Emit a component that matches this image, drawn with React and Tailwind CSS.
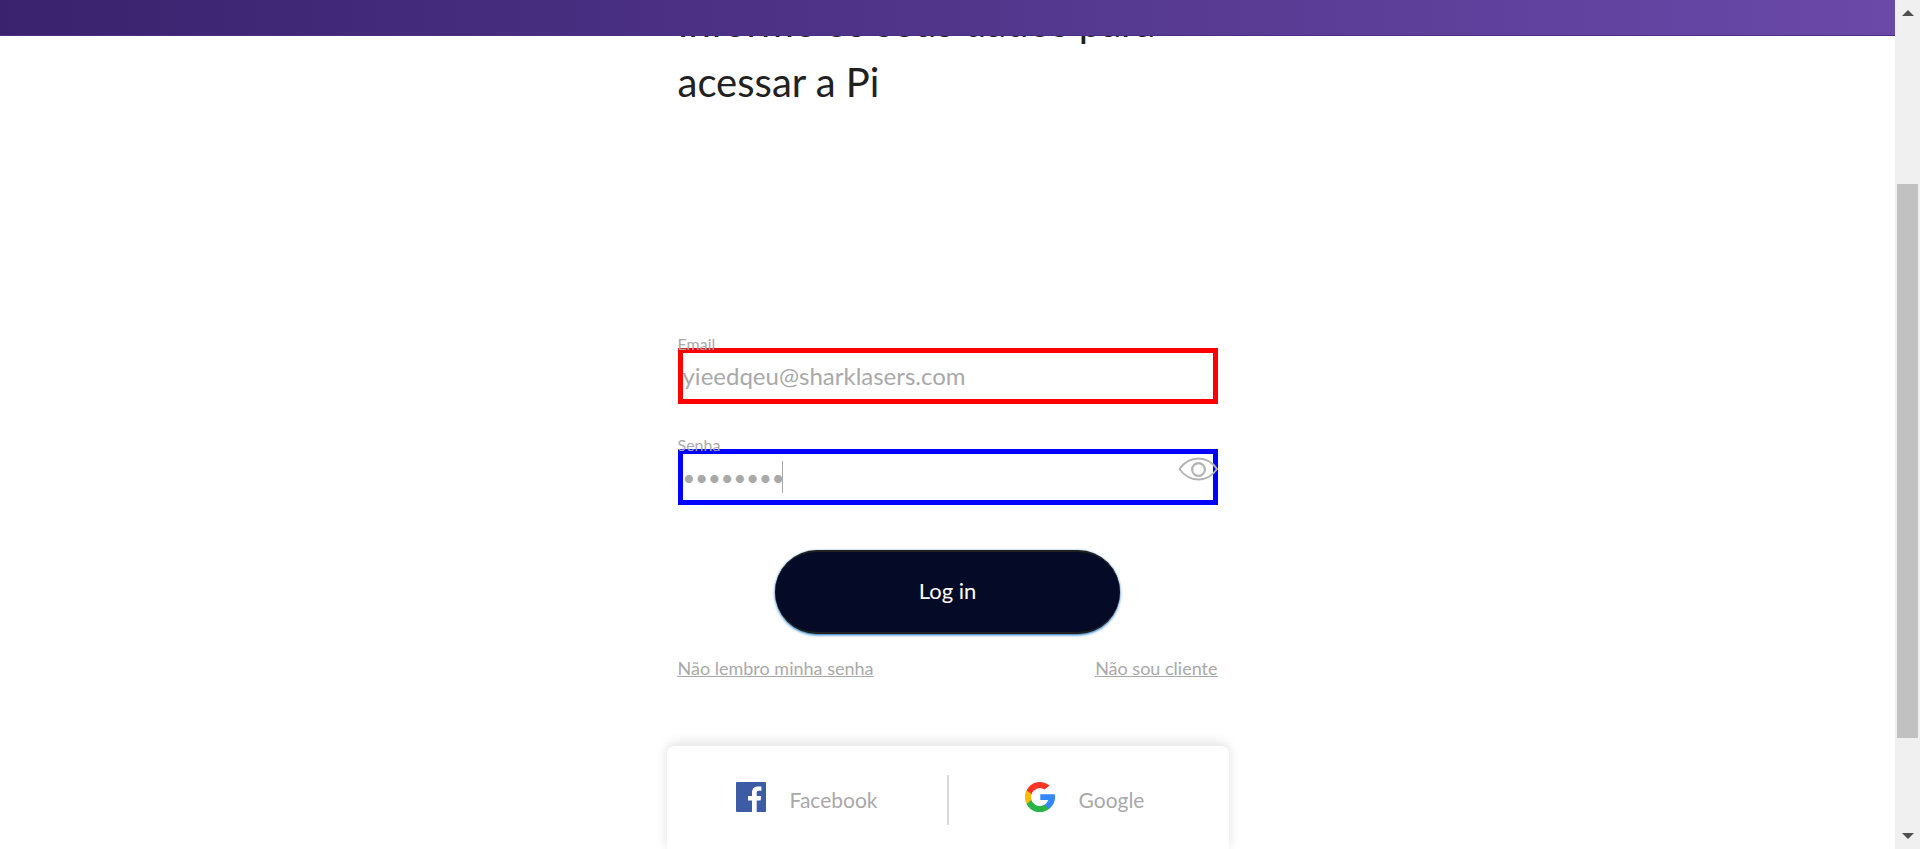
import React from "react";

function FacebookIcon() {
  return (
    <svg className="size-[30px] shrink-0" viewBox="0 0 30 30" aria-hidden="true">
      <rect width="30" height="30" rx="1" fill="#3e5ba6" />
      <path
        d="M16 30V18.5h-4V14h4v-3.6C16 6.5 18.4 4.4 21.9 4.4c1.7 0 3.1.1 3.5.2v4.1H23c-1.9 0-2.3.9-2.3 2.2V14h4.5l-.6 4.5h-3.9V30z"
        fill="#fff"
      />
    </svg>
  );
}

function GoogleIcon() {
  return (
    <svg className="size-[30px] shrink-0" viewBox="0 0 30 30" aria-hidden="true">
      <path d="M6.6 18.1 5.6 22l-3.8.1A15 15 0 0 1 1.6 8.1l3.4.6 1.5 3.4a8.9 8.9 0 0 0 .1 6z" fill="#fbbb00" />
      <path d="M29.7 12.2a15 15 0 0 1-5.3 14.5l-4.3-.2-.6-3.8a8.9 8.9 0 0 0 3.8-4.6h-8v-5.9z" fill="#3486fb" />
      <path d="M24.4 26.7A15 15 0 0 1 1.5 22.1l4.9-4a8.9 8.9 0 0 0 12.9 4.6z" fill="#28b446" />
      <path d="M24.6 3.5l-4.9 4a8.9 8.9 0 0 0-13.2 4.7l-4.9-4A15 15 0 0 1 24.6 3.5z" fill="#fc3527" />
    </svg>
  );
}

function EyeIcon() {
  return (
    <svg className="h-6 w-10" viewBox="0 0 40 24" fill="none" stroke="#b3b3b3" aria-hidden="true">
      <path d="M1.5 12C6 5.5 12 1.5 20.5 1.5S34.5 5.5 39 12c-4.5 6.5-10.5 10.5-18.5 10.5S6 18.5 1.5 12z" strokeWidth="1.8" />
      <circle cx="20.5" cy="12.5" r="6.4" strokeWidth="2.2" />
    </svg>
  );
}

function Field({ id, label, type, value, look, children }) {
  return (
    <div className="relative pt-5">
      <label htmlFor={id} className="absolute top-1 left-0 z-10 text-base leading-6">
        {label}
      </label>
      <div className="relative">
        <input
          id={id}
          type={type}
          defaultValue={value}
          className={"block h-14 w-full border-5 bg-white text-[#a9a9a9] outline-none " + look}
        />
        {children}
      </div>
    </div>
  );
}

function ScrollBar() {
  return (
    <div className="flex w-[25px] shrink-0 flex-col items-center bg-[#f0f0f0]" aria-hidden="true">
      <svg className="h-[26px] w-3 shrink-0" viewBox="0 0 12 26">
        <path d="M0 16h12L6 10z" fill="#505050" />
      </svg>
      <div className="flex min-h-0 w-[21px] flex-1 flex-col">
        <div className="grow-[158]" />
        <div className="grow-[554] bg-[#c1c1c1]" />
        <div className="grow-[85]" />
      </div>
      <svg className="h-[26px] w-3 shrink-0" viewBox="0 0 12 26">
        <path d="M0 10h12l-6 6z" fill="#505050" />
      </svg>
    </div>
  );
}

export default function App() {
  return (
    <div className="flex h-screen overflow-hidden bg-white font-['Lato','Open_Sans',sans-serif] text-[#a9a9a9]">
      <div className="relative min-w-0 flex-1 overflow-hidden">
        <header className="absolute inset-x-0 top-0 z-20 h-9 border-b border-[#4a2f86] bg-linear-to-r from-[#3a226e] to-[#6a49a9]" />
        <main className="mx-auto w-full max-w-[562px]">
          <div className="px-[11px]">
            <h1 className="-mt-2 h-[336px] text-[40px] leading-[60px] text-[#212121]">
              Informe os seus dados para acessar a Pi
            </h1>
            <form onSubmit={(e) => e.preventDefault()}>
              <div className="flex flex-col gap-[25px]">
                <Field
                  id="email"
                  label="Email"
                  type="email"
                  value="yieedqeu@sharklasers.com"
                  look="border-[#ff0000] pb-0.5 text-2xl"
                />
                <Field
                  id="senha"
                  label="Senha"
                  type="password"
                  value="12345678"
                  look="border-[#0000ff] text-[22px]"
                >
                  <span className="absolute top-3 left-[104px] h-8 w-px bg-[#a9a9a9]" />
                  <button type="button" aria-label="Mostrar senha" className="absolute top-2 right-0">
                    <EyeIcon />
                  </button>
                </Field>
              </div>
              <button
                type="submit"
                className="mx-auto mt-[45px] block h-[84px] w-[345px] max-w-full rounded-full border-y-2 border-[#212121] bg-[#050b26] pb-1 text-[22px] text-white shadow-[0_1px_3px_#0067b8]"
              >
                Log in
              </button>
            </form>
            <div className="mt-5 flex justify-between text-lg leading-7 underline">
              <a href="#senha">Não lembro minha senha</a>
              <a href="#cadastro">Não sou cliente</a>
            </div>
          </div>
          <div className="mt-16 grid grid-cols-[1fr_2px_1fr] items-center rounded-lg bg-white py-[29px] text-[21px] leading-8 shadow-[0_-3px_12px_rgba(0,0,0,0.12)]">
            <button type="button" className="flex items-center justify-center gap-6 pb-1.5">
              <FacebookIcon />
              <span className="pt-1.5">Facebook</span>
            </button>
            <div className="h-[50px] bg-[#d8d8d8]" />
            <button type="button" className="flex items-center justify-center gap-6 pr-2 pb-1.5">
              <GoogleIcon />
              <span className="pt-1.5">Google</span>
            </button>
          </div>
        </main>
      </div>
      <ScrollBar />
    </div>
  );
}
